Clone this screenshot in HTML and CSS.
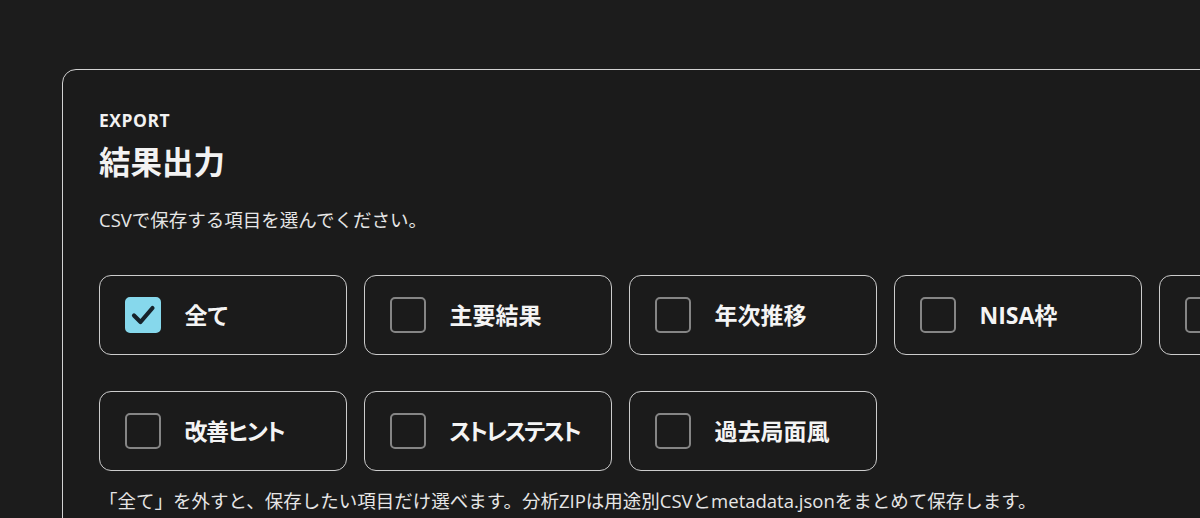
FILE: index.html
```html
<!DOCTYPE html>
<html lang="ja">
<head>
<meta charset="utf-8">
<title>結果出力</title>
<link rel="stylesheet" href="styles.css">
</head>
<body>
<main class="page">
  <section class="card">
    <p class="eyebrow">EXPORT</p>
    <h1 class="title">結果出力</h1>
    <p class="desc">CSVで保存する項目を選んでください。</p>
    <div class="options">
      <label class="option">
        <span class="box checked">
          <svg viewBox="0 0 36 36" width="36" height="36"><path d="M9 18.5 L15.5 25 L27.5 11" fill="none" stroke="#16222a" stroke-width="4.2" stroke-linecap="round" stroke-linejoin="round"/></svg>
        </span>
        <span class="label">全て</span>
      </label>
      <label class="option"><span class="box"></span><span class="label">主要結果</span></label>
      <label class="option"><span class="box"></span><span class="label">年次推移</span></label>
      <label class="option"><span class="box"></span><span class="label">NISA枠</span></label>
      <label class="option"><span class="box"></span><span class="label">取り崩し</span></label>
      <label class="option"><span class="box"></span><span class="label kana-mix">改善ヒント</span></label>
      <label class="option"><span class="box"></span><span class="label kana">ストレステスト</span></label>
      <label class="option"><span class="box"></span><span class="label">過去局面風</span></label>
    </div>
    <p class="note">「全て」を外すと、保存したい項目だけ選べます。分析ZIPは用途別CSVとmetadata.jsonをまとめて保存します。</p>
  </section>
</main>
</body>
</html>
```

FILE: styles.css
```css
html, body {
  margin: 0;
  padding: 0;
  background: #1c1c1c;
  overflow: hidden;
}
body {
  font-family: "Open Sans", "Noto Sans CJK JP", sans-serif;
  color: #f2f2f2;
}
.page {
  padding: 69px 0 0 62px;
  width: 1500px;
}
.card {
  width: 1380px;
  border: 1.5px solid #d2d2d2;
  border-radius: 14px;
  background: #1b1b1b;
  padding: 40px 36px 40px 36px;
  box-sizing: border-box;
}
.eyebrow {
  margin: 0;
  font-size: 17.5px;
  line-height: 20px;
  font-weight: 700;
  letter-spacing: 0.03em;
}
.title {
  margin: 12px 0 0 0;
  font-size: 31.5px;
  line-height: 40px;
  font-weight: 700;
}
.desc {
  margin: 26px 0 0 0;
  font-size: 18.5px;
  line-height: 24px;
  color: #e6e6e6;
}
.options {
  margin-top: 43px;
  display: grid;
  grid-template-columns: repeat(5, 248px);
  column-gap: 17px;
  row-gap: 36px;
}
.option {
  height: 80px;
  box-sizing: border-box;
  border: 1.5px solid #cccccc;
  border-radius: 12px;
  display: flex;
  align-items: center;
  padding-left: 24.5px;
  gap: 24px;
}
.box {
  width: 36px;
  height: 36px;
  box-sizing: border-box;
  border: 2px solid #858585;
  border-radius: 5px;
  flex: none;
  display: flex;
}
.box.checked {
  background: #86d8ec;
  border-color: #86d8ec;
}
.box.checked svg {
  margin: -2px;
}
.label {
  font-size: 23px;
  line-height: 30px;
  font-weight: 700;
  color: #f4f4f4;
  font-feature-settings: "palt";
}
.label.kana {
  letter-spacing: -0.1em;
}
.label.kana-mix {
  letter-spacing: -0.06em;
}
.note {
  margin: 18px 0 0 0;
  font-size: 18.5px;
  line-height: 24px;
  color: #e6e6e6;
}
```
